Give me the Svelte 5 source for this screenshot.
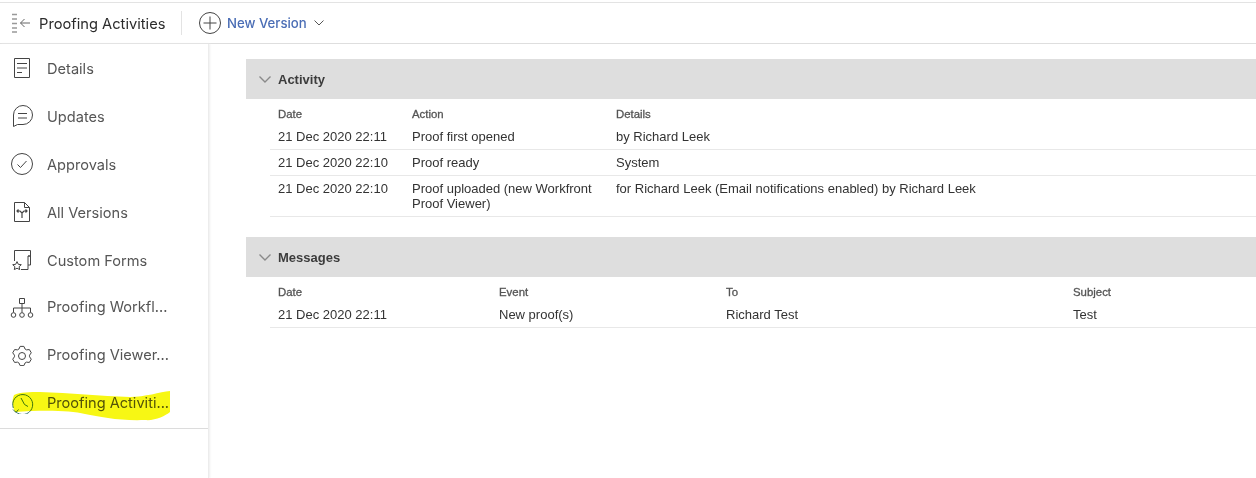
<script>
  const navItems = [
    { id: 'details', label: 'Details' },
    { id: 'updates', label: 'Updates' },
    { id: 'approvals', label: 'Approvals' },
    { id: 'versions', label: 'All Versions' },
    { id: 'forms', label: 'Custom Forms' },
    { id: 'workflow', label: 'Proofing Workfl...' },
    { id: 'viewer', label: 'Proofing Viewer...' },
    { id: 'activities', label: 'Proofing Activiti...' }
  ];

  const activity = [
    { date: '21 Dec 2020 22:11', action: 'Proof first opened', details: 'by Richard Leek' },
    { date: '21 Dec 2020 22:10', action: 'Proof ready', details: 'System' },
    {
      date: '21 Dec 2020 22:10',
      action: 'Proof uploaded (new Workfront Proof Viewer)',
      details: 'for Richard Leek (Email notifications enabled) by Richard Leek'
    }
  ];

  // six tooth gear outline, teeth pointing straight up and down
  const gearPath = () => {
    const pt = (deg, r) => {
      const a = (deg * Math.PI) / 180;
      return `${(12 + r * Math.cos(a)).toFixed(2)} ${(14 + r * Math.sin(a)).toFixed(2)}`;
    };
    let d = '';
    for (let i = 0; i < 6; i++) {
      const a = 30 + i * 60;
      d += `${i ? 'L' : 'M'}${pt(a - 24, 7.6)} L${pt(a - 11, 9.8)} L${pt(a + 11, 9.8)} L${pt(a + 24, 7.6)} `;
    }
    return d + 'Z';
  };
</script>

<div class="page">
  <header class="topbar">
    <svg class="collapse" width="18" height="20" viewBox="0 0 18 20" fill="none">
      <path d="M0 1.500h5M0 6h5M0 10.500h5M0 15h5M0 19h5" stroke="#999" stroke-width="1.300" />
      <path d="M18 10H8.500M12.500 6l-4 4 4 4" stroke="#666" />
    </svg>
    <h1>Proofing Activities</h1>
    <span class="sep"></span>
    <svg width="22" height="22" viewBox="0 0 22 22" fill="none" stroke="#444" stroke-width="1">
      <circle cx="11" cy="11" r="10.500" />
      <path d="M11 4.500v13M4.500 11h13" />
    </svg>
    <span class="new">New Version</span>
    <svg class="caret" width="10" height="6" viewBox="0 0 10 6" fill="none" stroke="#555" stroke-width="1">
      <path d="M.5.5 5 5 9.500.5" />
    </svg>
  </header>

  <div class="body">
    <nav class="sidebar">
      <ul>
        {#each navItems as item (item.id)}
          <li class={item.id}>
            <span class="icon">
              <svg width="24" height="24" viewBox="0 0 24 24" fill="none" stroke="#444" stroke-width="1">
                {#if item.id === 'details'}
                  <path d="M4.500 2.500h15v19h-15zM7 7.500h10M7 12h10M7 16.500h5" />
                {:else if item.id === 'updates'}
                  <path d="M3.500 22.500V11a9.500 9.500 0 1 1 9.500 9.500H7.500zM8 9.500h9M8 14h9" />
                {:else if item.id === 'approvals'}
                  <circle cx="12" cy="12" r="10.500" />
                  <path d="M7.500 12.500l3 3 6-6.500" />
                {:else if item.id === 'versions'}
                  <path d="M4.500 2.500h10l5 5v14h-15zM14.500 2.500v5h5" />
                  <path d="M12 18v-5M12 13l-2-2H7.500M12 13l2-2h2.500M8.500 9.500 7 11l1.500 1.500M15.500 9.500 17 11l-1.500 1.500" stroke-width="1.200" />
                {:else if item.id === 'forms'}
                  <path d="M4.500 13V2.500h16V8h-2.500v9h2.500M18 8h2.500M18 17v4.500h-7M20.500 8v9" />
                  <path d="M7 13.600l1.300 2.700 3 .4-2.200 2 .6 2.900L7 20.200l-2.700 1.400.6-2.900-2.200-2 3-.4z" />
                {:else if item.id === 'workflow'}
                  <path d="M9.500 4.500h5v5h-5zM12 9.500v9M3.500 18.500V14h17v4.500" />
                  <circle cx="3.500" cy="21" r="2.300" />
                  <circle cx="12" cy="21" r="2.300" />
                  <circle cx="20.500" cy="21" r="2.300" />
                {:else if item.id === 'viewer'}
                  <circle cx="12" cy="14" r="3.500" />
                  <path d={gearPath()} stroke-linejoin="round" />
                {:else}
                  <path d="M5.500 21.500A10 10 0 1 0 3.300 18" stroke="#3f7a70" />
                  <path d="M11 8l3.500 6.500 3.500 2" stroke="#3f7a70" />
                  <path d="M3 19.500l3 3 2.500-3" stroke="#3f7a70" />
                {/if}
              </svg>
            </span>
            <span class="label">{item.label}</span>
          </li>
        {/each}
      </ul>
    </nav>

    <main>
      <section class="activity">
        <h2>
          <svg width="12" height="7" viewBox="0 0 12 7" fill="none" stroke="#8a8a8a" stroke-width="1.400"><path d="M.5.500 6 6 11.500.500" /></svg>
          Activity
        </h2>
        <div class="grid cols-a head">
          <span>Date</span><span>Action</span><span>Details</span>
        </div>
        {#each activity as row}
          <div class="grid cols-a row">
            <span>{row.date}</span><span class="action">{row.action}</span><span>{row.details}</span>
          </div>
        {/each}
      </section>

      <section class="messages">
        <h2>
          <svg width="12" height="7" viewBox="0 0 12 7" fill="none" stroke="#8a8a8a" stroke-width="1.400"><path d="M.5.500 6 6 11.500.500" /></svg>
          Messages
        </h2>
        <div class="grid cols-m head">
          <span>Date</span><span>Event</span><span>To</span><span>Subject</span>
        </div>
        <div class="grid cols-m row">
          <span>21 Dec 2020 22:11</span><span>New proof(s)</span><span>Richard Test</span><span>Test</span>
        </div>
      </section>
    </main>
  </div>

  <!-- marker scribble drawn over the last nav item -->
  <svg class="marker" width="172" height="40" viewBox="0 0 172 40">
    <path fill="#f7f714" d="M14 7 C20 4 30 4 40 4 C70 5 100 8 130 9 C145 9 160 4 170 3 L170 24 C165 28 155 33 145 32 C120 33 100 29 85 26 C70 22 40 22 15 24 C12 17 12 12 14 7Z" />
  </svg>
</div>

<style>
  :global(body) {
    margin: 0;
    background: #fff;
  }
  .page {
    position: relative;
    height: 478px;
    overflow: hidden;
    font-family: Inter, sans-serif;
  }
  .topbar {
    display: flex;
    align-items: center;
    height: 40px;
    margin-top: 2px;
    border-top: 1px solid #e3e3e3;
    border-bottom: 1px solid #dedede;
    padding-left: 12px;
  }
  .collapse {
    margin-right: 9px;
  }
  h1 {
    margin: 0;
    padding-top: 1px;
    font-size: 14.700px;
    font-weight: 400;
    color: #2c2c2c;
    width: 126px;
    white-space: nowrap;
  }
  .sep {
    width: 1px;
    height: 24px;
    background: #e3e3e3;
    margin: 0 17px 0 16px;
  }
  .new {
    margin-left: 6px;
    font-size: 13.200px;
    font-weight: 500;
    color: #4a6db5;
  }
  .caret {
    margin-left: 7px;
  }
  .body {
    display: flex;
    height: 434px;
  }
  .sidebar {
    width: 208px;
    flex: none;
    border-right: 1px solid #ececec;
    box-shadow: 1px 0 2px #eee;
  }
  ul {
    list-style: none;
    margin: 0;
    padding: 0 0 2px;
    border-bottom: 1px solid #dcdcdc;
    height: 382px;
  }
  li {
    display: flex;
    align-items: center;
    height: 48px;
    padding-left: 10px;
    font-size: 14.600px;
    color: #555;
  }
  li.workflow, li.viewer, li.activities {
    position: relative;
    top: -2px;
  }
  .icon {
    display: flex;
    width: 37px;
  }
  .label {
    padding-top: 2px;
    white-space: nowrap;
  }
  main {
    flex: 1;
    padding: 15px 0 0 37px;
    font-family: "Liberation Sans", Arial, sans-serif;
    font-size: 13px;
    color: #333;
  }
  section {
    margin-bottom: 20px;
  }
  h2 {
    display: flex;
    align-items: center;
    gap: 7px;
    height: 40px;
    margin: 0;
    padding-left: 13px;
    background: #dedede;
    font-size: 13px;
    font-weight: 700;
    color: #3c3c3c;
  }
  .grid {
    display: grid;
    margin-left: 24px;
    padding-left: 8px;
  }
  .cols-a {
    grid-template-columns: 134px 204px 1fr;
  }
  .cols-m {
    grid-template-columns: 221px 227px 347px 1fr;
  }
  .head {
    padding-top: 9px;
    font-size: 11.400px;
    line-height: 13px;
    color: #555;
    -webkit-text-stroke: 0.3px #555;
  }
  .row {
    padding-top: 5px;
    padding-bottom: 5px;
    line-height: 15px;
    border-bottom: 1px solid #e8e8e8;
  }
  .head + .row {
    padding-top: 8px;
  }
  .action {
    max-width: 190px;
  }
  .marker {
    position: absolute;
    left: 0;
    top: 388px;
    mix-blend-mode: multiply;
    pointer-events: none;
  }
</style>
